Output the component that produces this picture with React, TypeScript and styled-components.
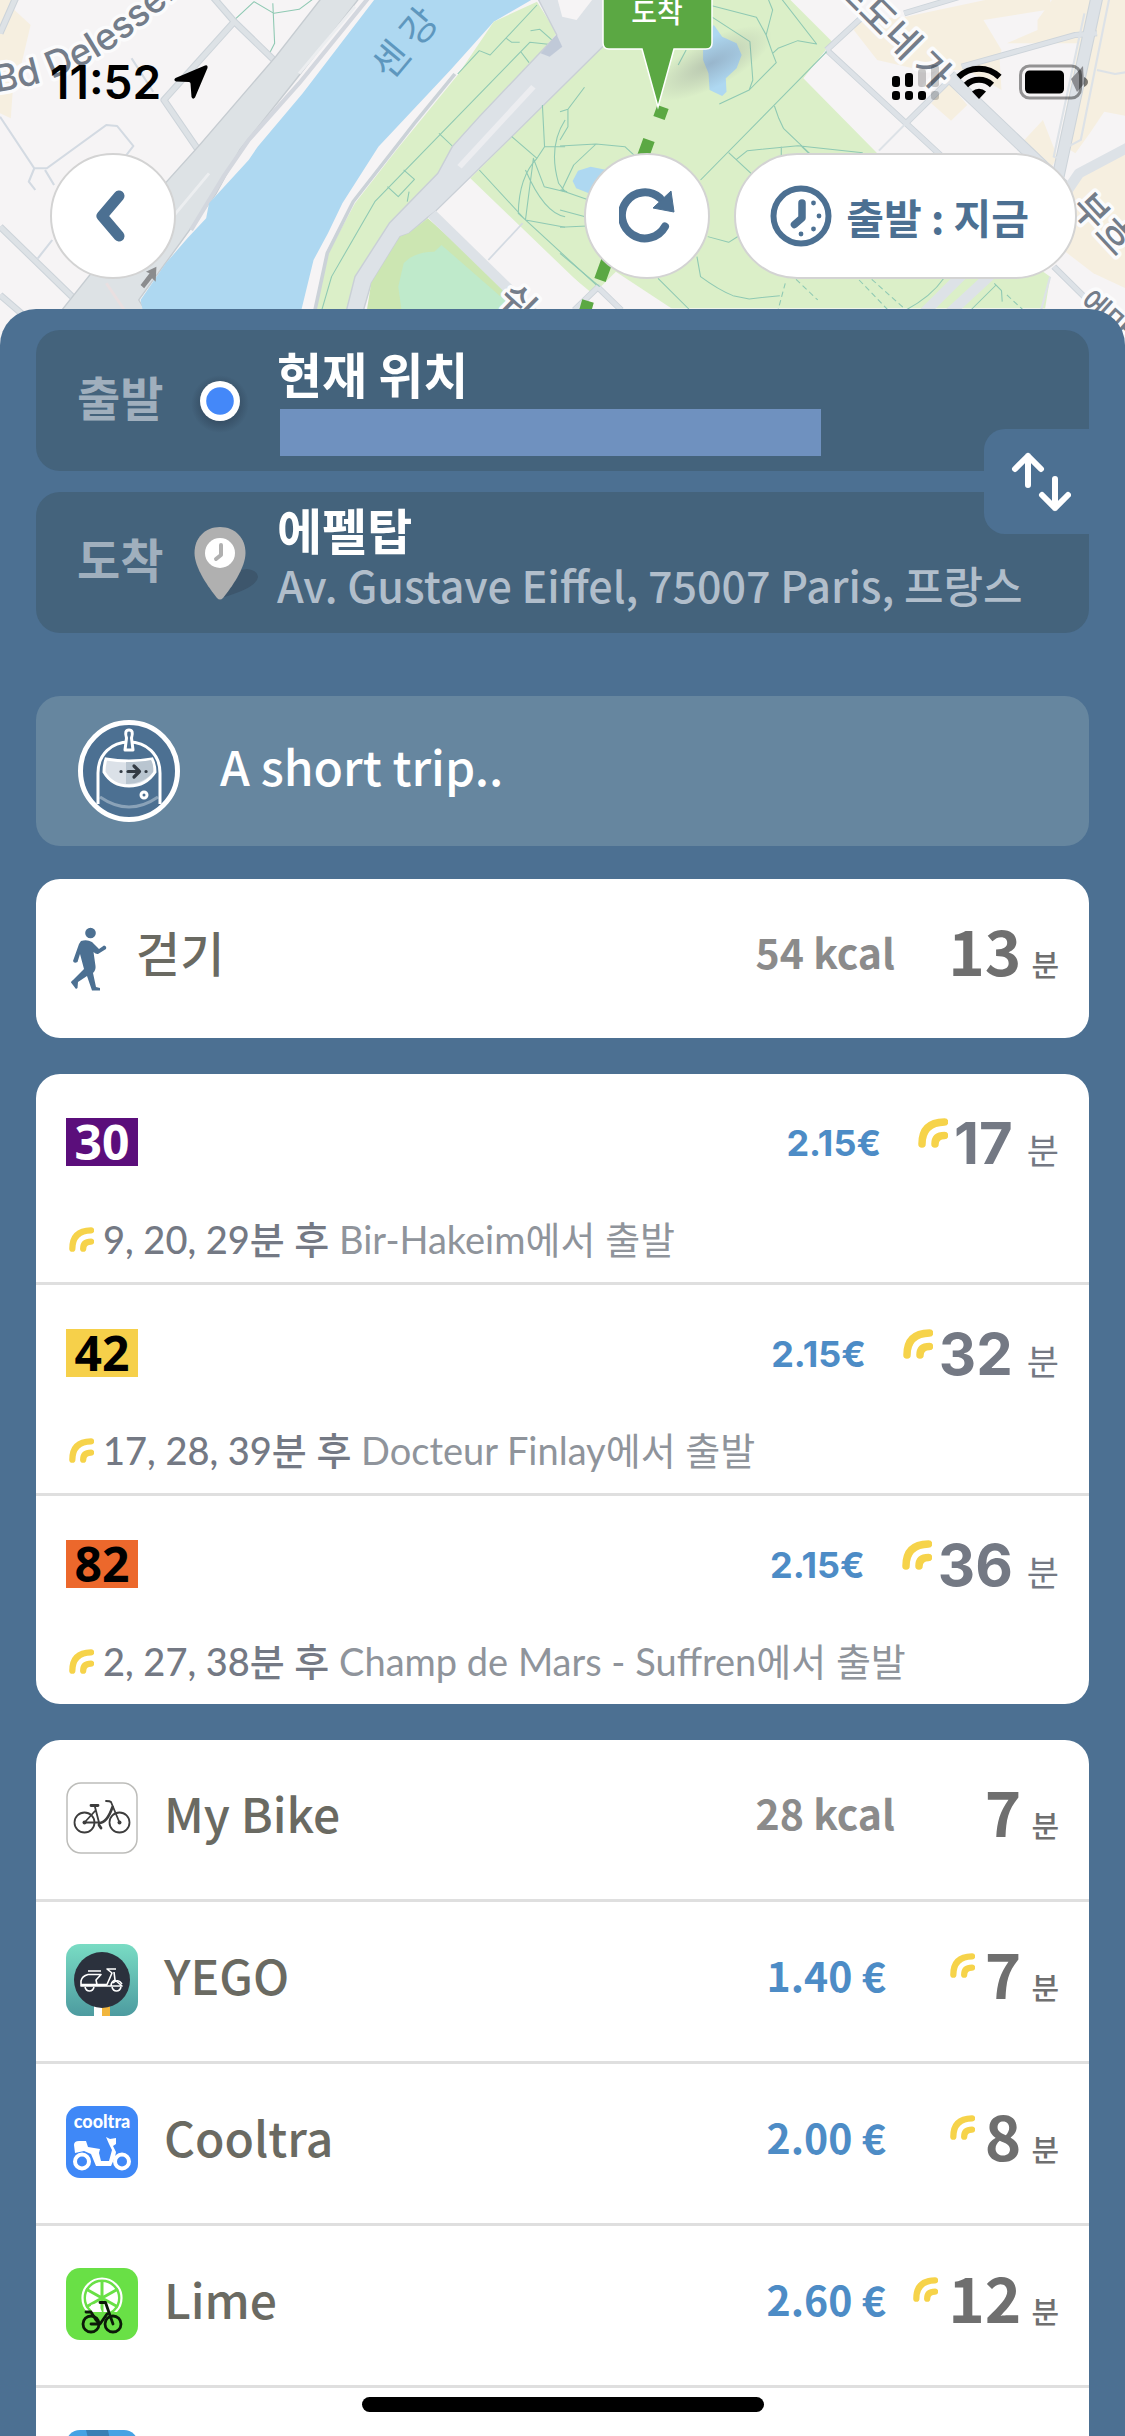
import React from "react";
import styled, { createGlobalStyle } from "styled-components";

const KR = `"Noto Sans CJK KR", "Noto Sans", sans-serif`;
const SOFT = `Lato, "Noto Sans CJK KR", sans-serif`;
const FIGURES = `Inter, "Noto Sans CJK KR", sans-serif`;

const color = {
  sheet: "#4c7092",
  field: "#44637c",
  notice: "#66869f",
  name: "#6a6a62",
  time: "#6f6f6f",
  muted: "#8b8b8b",
  slate: "#747984",
  slateLight: "#8f949b",
  price: "#4d8cc6",
  live: "#f6d34a",
  line: "#dfdfdf",
};

const GlobalStyle = createGlobalStyle`
  * { box-sizing: border-box; }
  body { margin: 0; font-family: ${KR}; background: ${color.sheet}; }
  button { font: inherit; border: 0; padding: 0; margin: 0; cursor: pointer; }
  ul { list-style: none; margin: 0; padding: 0; }
  svg { display: block; flex: none; }
`;

const Screen = styled.main`
  position: relative;
  display: flex;
  flex-direction: column;
  height: 100vh;
  overflow: hidden;
`;

/* ---------- map header ---------- */

const Header = styled.header`
  position: relative;
  flex: none;
  padding: 60px 48px 30px 50px;
`;

const MapCanvas = styled.svg`
  position: absolute;
  top: 0;
  left: 0;
  width: 100%;
  height: 350px;
`;

const StatusBar = styled.div`
  position: relative;
  display: flex;
  justify-content: space-between;
  align-items: center;
  height: 44px;
  margin-right: -12px;
`;

const StatusGroup = styled.div`
  display: flex;
  align-items: center;
  gap: ${(p: { $gap: number }) => p.$gap}px;
`;

const Clock = styled.time`
  font: 600 46px/44px Inter, sans-serif;
  color: #000;
`;

const Controls = styled.nav`
  position: relative;
  display: flex;
  gap: 24px;
  margin-top: 49px;
`;

const RoundButton = styled.button`
  display: flex;
  align-items: center;
  justify-content: center;
  width: 126px;
  height: 126px;
  border-radius: 63px;
  border: 2px solid #d3d3d3;
  background: #fff;
  &:first-child { margin-right: auto; }
`;

const PillButton = styled(RoundButton)`
  width: auto;
  gap: 14px;
  padding: 0 46px 0 34px;
  color: ${color.sheet};
  font: 700 41px/60px ${KR};
`;

/* ---------- sheet ---------- */

const Sheet = styled.section`
  position: relative;
  flex: 1;
  padding: 21px 36px 0;
  border-radius: 36px 36px 0 0;
  background: ${color.sheet};
`;

const Fields = styled.div`
  position: relative;
  display: flex;
  flex-direction: column;
  gap: 21px;
  margin-bottom: 63px;
`;

const Field = styled.button`
  display: grid;
  grid-template-columns: 86px 114px 1fr;
  align-items: center;
  height: 141px;
  padding-left: 41px;
  border-radius: 24px;
  background: ${color.field};
  text-align: left;
  white-space: nowrap;
`;

const FieldLabel = styled.span`
  padding-bottom: 10px;
  font-size: 47px;
  line-height: 56px;
  font-weight: 700;
  color: #a0afbd;
`;

const FieldIcon = styled.span`
  display: flex;
  justify-content: center;
`;

const FieldText = styled.span`
  display: flex;
  flex-direction: column;
`;

const FieldTitle = styled.span`
  font-size: 49px;
  line-height: 56px;
  font-weight: 700;
  color: #fff;
`;

const FieldAddress = styled.span`
  padding-bottom: 14px;
  font-size: 43px;
  line-height: 54px;
  font-weight: 500;
  color: #b1becb;
`;

const HiddenAddress = styled.span`
  height: 47px;
  margin: 8px 268px 0 3px;
  background: #6f91bf;
`;

const SwapButton = styled.button`
  position: absolute;
  right: 0;
  top: 99px;
  display: flex;
  align-items: center;
  justify-content: flex-end;
  width: 105px;
  height: 105px;
  padding-right: 18px;
  border-radius: 21px 0 0 21px;
  background: ${color.sheet};
`;

const Notice = styled.div`
  display: flex;
  align-items: center;
  gap: 40px;
  height: 150px;
  padding: 0 42px;
  margin-bottom: 33px;
  border-radius: 24px;
  background: ${color.notice};
`;

const NoticeText = styled.p`
  margin: 0;
  padding-bottom: 12px;
  font-size: 48px;
  line-height: 60px;
  font-weight: 500;
  color: #fff;
`;

const Card = styled.ul`
  margin-bottom: 36px;
  border-radius: 24px;
  background: #fff;
  overflow: hidden;
  > li + li { border-top: 3px solid ${color.line}; }
`;

const RideRow = styled.li`
  display: flex;
  align-items: flex-start;
  gap: 26px;
  padding: 42px 30px 45px;
  line-height: 60px;
`;

const RideIcon = styled.span`
  display: flex;
  align-items: center;
  width: ${(p: { $narrow?: boolean }) => (p.$narrow ? 44 : 72)}px;
  height: 72px;
`;

const RideName = styled.span`
  flex: 1;
  font-size: 48px;
  font-weight: 500;
  color: ${color.name};
`;

const Energy = styled.span`
  font-size: 41px;
  font-weight: 700;
  color: ${color.muted};
`;

const Price = styled.span`
  padding-right: 9px;
  font-size: 41px;
  font-weight: 700;
  color: ${color.price};
`;

const RideTime = styled.span`
  display: flex;
  justify-content: flex-end;
  align-items: baseline;
  gap: 10px;
  width: 138px;
  line-height: 56px;
  color: ${color.time};
  svg { align-self: flex-start; margin-top: 9px; }
  b { font-size: 62px; font-weight: 700; }
  small { font-size: 30px; font-weight: 500; }
`;

const LineRow = styled.li`
  padding: 44px 30px 19px;
  font-family: ${SOFT};
`;

const LineTop = styled.div`
  display: flex;
  align-items: flex-start;
  height: 48px;
  font-family: ${FIGURES};
  line-height: 50px;
`;

const LineBadge = styled.span`
  display: flex;
  align-items: center;
  justify-content: center;
  width: 72px;
  height: 48px;
  margin-right: auto;
  background: ${(p: { $bg: string; $fg: string }) => p.$bg};
  color: ${(p) => p.$fg};
  font: 700 48px/48px "Noto Sans", sans-serif;
`;

const Fare = styled.span`
  margin-right: 37px;
  font-size: 36px;
  font-weight: 700;
  color: ${color.price};
`;

const LineTime = styled.span`
  display: flex;
  align-items: baseline;
  color: ${color.slate};
  svg { align-self: flex-start; margin-right: 6px; }
  b { font-size: 58px; font-weight: 700; }
  small { margin-left: 14px; font-size: 35px; font-weight: 400; }
`;

const Departures = styled.div`
  display: flex;
  align-items: center;
  gap: 9px;
  margin-top: 49px;
  padding-left: 3px;
  font-size: 38px;
  line-height: 48px;
  color: ${color.slateLight};
  white-space: pre;
  strong { font-weight: 500; color: ${color.slate}; }
`;

const HomeIndicator = styled.div`
  position: absolute;
  left: 50%;
  bottom: 24px;
  width: 402px;
  height: 15px;
  margin-left: -201px;
  border-radius: 8px;
  background: #000;
`;

/* ---------- drawings ---------- */

const halo = {
  stroke: "#fbfbfc",
  strokeWidth: 7,
  strokeLinejoin: "round" as const,
  paintOrder: "stroke",
  fill: "#747d8a",
};

const ParisMap = () => (
  <MapCanvas viewBox="0 0 1125 350" preserveAspectRatio="xMidYMin slice" aria-hidden="true">
    <rect width="1125" height="350" fill="#f6f4f5" />
    <g transform="scale(.3604 .3333)" fill="none" strokeLinejoin="round">
      <path fill="#f6efe0" d="M0 0H30L40 30L85 75L60 190L40 200L30 355L0 340Z" />
      <g stroke="#cdd4da" strokeWidth="20">
        <path d="M590-10L650 65L760 180M650 65L455 300L550 450M0 100L45-10M0 680L200 890M0 885L70 950" />
      </g>
      <g stroke="#dde2e6" strokeWidth="14">
        <path d="M590-10L650 65L760 180M650 65L455 300L550 450M0 100L45-10M0 680L200 890M0 885L70 950" />
      </g>
      <path stroke="#d3dae2" strokeWidth="6" d="M0 350L95 505H130L295 375L325 378L370 438L340 480M365 175L425 275M95 505L80 545L98 570M125 510L150 555M105 775L145 720" />
      <path stroke="#8fc9b3" strokeWidth="3" d="M655 55L705 5L760 40L830 28L870-4M757 10L762 130L750 155" />
      <path fill="#dde2e5" stroke="#c6ccd1" strokeWidth="4" d="M895-10L765 170L550 440L400 620L150 960H420L385 900L600 580L665 450L820 240L1000-10Z" />
      <path stroke="#eceef0" strokeWidth="8" d="M985 20L830 220M580 520L480 650" />
      <path stroke="#d3d7de" strokeWidth="12" d="M1025-10L830 250L690 420L620 530L530 690" />
      <path fill="#aed8f1" d="M1045-10L840 280L715 440L690 480L580 610L572 655L520 715L460 790L390 900L420 1050H815L835 935L870 780L910 700L950 610L1050 440L1250 210L1370 65L1490-10Z" />
      <path fill="#dbefc8" d="M1270 225L1370 65L1490 5L1545 100L1450 220L1255 440L1215 520L1080 670L985 830L940 1050H850L910 760L985 610L1100 450Z" />
      <path stroke="#cbd2d8" strokeWidth="10" d="M1262 222L1150 370L980 605L908 760L860 1000" />
      <path stroke="#8fc9b3" strokeWidth="3" d="M1490 15L1360 165L1330 152L1270 222M1540 135L1470 127L1040 605L920 830L893 930M1405 115L1420 127H1442M1445 155L1468 188M1218 400L1255 438M1075 560L1105 590L1150 538L1120 510M1472 92L1498 88L1568 155M1130 605L1135 575" />
      <path fill="#dbefc8" d="M1568 250L1305 535L1680 925H2900L2914 830L2434 460L2229 235L2309 125L2184-10H1800Z" />
      <path fill="#dde2e7" stroke="#c9cfd6" strokeWidth="4" d="M1545 105L1330 350L1255 440L1215 520L1080 670L985 830L945 1000H990L1030 850L1110 710L1135 700L1187 652L1210 632L1420 410L1668 145L1820-20H1485Z" />
      <path fill="#f6f4f5" d="M1545-10H1650L1600 60L1560 50Z" />
      <path fill="#b9c3d4" d="M1500 160L1545 105L1560 140L1525 170Z" opacity=".8" />
      <path stroke="#ecedf0" strokeWidth="16" d="M1480 260L1275 500" />
      <path fill="#cce6b2" d="M1187 655L1440 900L1400 1050H1000L1030 850L1110 710L1135 700Z" />
      <path fill="#bfeacb" d="M1225 735L1400 900V1050H1130L1105 860L1120 790Q1150 755 1205 755Z" />
      <path stroke="#dde2e7" strokeWidth="30" d="M1198 642L1500 960" />
      <path stroke="#d3dae2" strokeWidth="5" d="M1355 780L1450 670" />
      <g stroke="#8fc9b3" strokeWidth="3">
        <path d="M1505 315L1511 440L1490 475L1420 410M1511 440H1568M1490 475Q1440 530 1438 640L1458 660L1480 475L1510 560L1568 575M1458 510Q1510 640 1568 650M1330 510L1458 660L1680 880M1458 660L1568 682M1568 360Q1520 440 1550 550L1568 575" />
      </g>
      <path fill="#8b8c8e" d="M390 855L415 820L405 815L434 800L432 845L422 835L400 865Z" />
      <path stroke="#e9dfe0" strokeWidth="8" d="M295 850L345 930" />
    </g>
    <g transform="translate(560 0) scale(.3604 .3333)" fill="none" strokeLinejoin="round">
      <g fill="#f6efe0">
        <path d="M830 60L960 50L1180 0H1360L1362 28L1175 60L1225 150L1220 180L1225 270L1130 210L1000 210L880 180L815 90Z" />
        <path d="M1365-10H1580V350L1510 335L1470 400L1430 460L1385 430L1440 130H1240L1325 90V60L1365 0Z" />
        <path d="M1340 360L1380 470L1360 510L1280 430ZM1030 310L1085 362L1130 315L1080 250Z" />
        <path d="M1430 520L1580 440V870L1480 820L1390 745Z" />
      </g>
      <path fill="#f6f4f5" d="M90 885L155 815L330 940H40Z" />
      <path fill="#f6f4f5" d="M0 800L95 885L40 940H0Z" />
      <g stroke="#cdd4da">
        <path strokeWidth="18" d="M740 150L1060 470M740 150L850 40M955 40L1110-10M1115 200L1430 105L1490 100M1100 220L960 370M40 930L105 862L170 930M1370 800L1520 960" />
        <path strokeWidth="36" d="M1080 230L1400 560M1490-10L1400 440L1380 540" />
      </g>
      <g stroke="#dde2e7">
        <path strokeWidth="13" d="M740 150L1060 470M740 150L850 40M955 40L1110-10M1115 200L1430 105L1490 100M1100 220L960 370M40 930L105 862L170 930M1370 800L1520 960" />
        <path strokeWidth="30" d="M1080 230L1400 560M1490-10L1400 440L1380 540M1580 440L1440 520L1390 600M1120 820L990 960M1200 820L1060 960" />
        <path strokeWidth="6" d="M960 370L885 452M1525-10L1445 420L1410 440M1455 40L1370 470L1400 480M1490 210L1540 222L1580 215M1360 830L1335 930" />
      </g>
      <g stroke="#8fc9b3" strokeWidth="3">
        <path d="M360 0L545 52L572 105L590 30L575-10M610-10L712 132L660 122L605 145L590 160L572 105M420 50L527 125L535 240L525 270L442 312M590 160L600 188L525 270M740 155L390 540M595 318L607 355L620 385L770 540M468 458L530 520M488 480L520 452L660 437L840 458M614 440V470M668 437L700 470M0 438L100 432L180 440L210 470M100 432L38 495L5 570L20 575M68 262L22 328L0 335M22 328V380L0 420M350 150L328 195M0 570L80 600M380 770L390 830Q440 870 480 887L525 897L610 887M0 630L70 650M0 682L75 678M410 710L468 727L500 705M0 760L110 860M272 835L360 930M1065 835Q1030 890 960 930M1205 850L1225 872L1227 905M1210 855L1140 930" />
        <path strokeDasharray="16 10" d="M625 850L605 930M655 838L715 900M830 840L910 930M865 838L960 930M1240 885L1285 930" />
      </g>
      <path fill="#aed8f1" d="M427 75L450 110L490 130L504 165L490 205L460 235L462 275L450 288L415 270L412 220L397 180V110Z" />
      <path fill="#aed8f1" d="M35 543L50 512L85 500L130 510V580H80L45 565Z" />
      <ellipse cx="420" cy="190" rx="190" ry="70" transform="rotate(-30 420 190)" fill="url(#pinShade)" />
    </g>
    <defs>
      <radialGradient id="pinShade">
        <stop offset="0" stopColor="#667" stopOpacity=".3" />
        <stop offset="1" stopColor="#667" stopOpacity="0" />
      </radialGradient>
      <path id="boulevard" d="M-4 92Q60 84 112 48Q150 22 190-16" />
    </defs>
    <path d="M663 107L659 118M649 140L641 162M608 258L600 280M588 301L582 322" fill="none" stroke="#5ba843" strokeWidth="12" />
    <path d="M603-10V43Q603 49 609 49H642L658 107L674 49H706Q712 49 712 43V-10Z" fill="#5ba843" stroke="#fff" strokeWidth="1.5" />
    <text x="657" y="23" textAnchor="middle" fontFamily="Noto Sans CJK KR" fontSize="28" fontWeight="500" fill="#fff">도착</text>
    <g fontFamily="Noto Sans CJK KR" fontSize="37" fontWeight="500">
      <text fontFamily="Inter" fontSize="37" {...halo}><textPath href="#boulevard">Bd Delesser</textPath></text>
      <text transform="translate(390 82) rotate(-50)" fontSize="38" fontWeight="400" fill="#5e97be">센 강</text>
      <text transform="translate(496 300) rotate(45)" {...halo}>쉬</text>
      <text transform="translate(833-11) rotate(45)" {...halo}>르도네 가</text>
      <text transform="translate(1070 208) rotate(47)" {...halo}>부흐</text>
      <text transform="translate(1078 304) rotate(42)" fontSize="30" {...halo}>에마</text>
    </g>
    <path d="M1071 79L1083 66L1084 84L1077 92Z" fill="#8b8c90" />
  </MapCanvas>
);

const LocationArrow = () => (
  <svg width="36" height="36" viewBox="0 0 36 36">
    <path d="M32 1.500Q35 .5 34.500 4L22 33.500Q20 36 18.500 33L17.500 19.500Q17.400 18.200 16 18L3 17.500Q0 16 2.500 14Z" fill="#000" />
  </svg>
);

const CellularIcon = () => (
  <svg width="48" height="36" viewBox="0 0 48 36">
    <g fill="#000">
      <rect x="1" y="12" width="8" height="11" rx="3" />
      <rect x="14" y="9" width="8" height="14" rx="3" />
      <rect x="1" y="27" width="8" height="9" rx="3" />
      <rect x="14" y="27" width="8" height="9" rx="3" />
      <rect x="27" y="27" width="8" height="9" rx="3" />
    </g>
    <g fill="#000" opacity=".2">
      <rect x="27" y="5" width="8" height="18" rx="3" />
      <rect x="40" y="1" width="8" height="22" rx="3" />
      <rect x="40" y="27" width="8" height="9" rx="3" />
    </g>
  </svg>
);

const WifiIcon = () => (
  <svg width="46" height="34" viewBox="0 0 46 34">
    <g fill="none" stroke="#000" strokeWidth="6">
      <path d="M2.500 12A29.500 29.500 0 0 1 43.500 12" />
      <path d="M10 20A19 19 0 0 1 36 20" />
    </g>
    <path d="M16 26.500A10.500 10.500 0 0 1 30 26.500L23 34Z" fill="#000" />
  </svg>
);

const BatteryIcon = () => (
  <svg width="70" height="36" viewBox="0 0 70 36">
    <rect x="1.500" y="2" width="60" height="32" rx="9" fill="none" stroke="#000" strokeOpacity=".4" strokeWidth="3" />
    <rect x="6" y="6.500" width="39" height="23" rx="4.500" fill="#000" />
    <path d="M65 13Q69 15 69 18T65 23Z" fill="#000" opacity=".5" />
  </svg>
);

const BackIcon = () => (
  <svg width="34" height="54" viewBox="4 0 34 54">
    <path d="M27 7L10 27L27 47" fill="none" stroke={color.sheet} strokeWidth="11" strokeLinecap="round" strokeLinejoin="round" />
  </svg>
);

const RefreshIcon = () => (
  <svg width="56" height="56" viewBox="0 0 56 56">
    <path d="M46 38.500A23 23 0 1 1 41 10" fill="none" stroke={color.sheet} strokeWidth="8" strokeLinecap="round" />
    <path d="M52 3L55 24L34 20Z" fill={color.sheet} stroke={color.sheet} strokeWidth="1" strokeLinejoin="round" />
  </svg>
);

const ClockIcon = () => (
  <svg width="62" height="62" viewBox="0 0 62 62">
    <circle cx="31" cy="31" r="27.500" fill="none" stroke={color.sheet} strokeWidth="6" />
    <path d="M32 18V33L24.500 39.500" fill="none" stroke={color.sheet} strokeWidth="7.500" strokeLinecap="round" strokeLinejoin="round" />
    <g fill={color.sheet}>
      <circle cx="43.500" cy="18" r="2.400" />
      <circle cx="49" cy="31" r="2.400" />
      <circle cx="43.500" cy="44" r="2.400" />
      <circle cx="31" cy="49" r="2.400" />
    </g>
  </svg>
);

const CurrentDot = () => (
  <svg width="64" height="64" viewBox="0 0 64 64">
    <defs>
      <radialGradient id="dotShade">
        <stop offset=".55" stopColor="#2f4459" stopOpacity=".7" />
        <stop offset="1" stopColor="#2f4459" stopOpacity="0" />
      </radialGradient>
    </defs>
    <circle cx="32" cy="35" r="29" fill="url(#dotShade)" />
    <circle cx="32" cy="32" r="20" fill="#fff" />
    <circle cx="32" cy="32" r="13.800" fill="#4488f9" />
  </svg>
);

const PinIcon = () => (
  <svg width="78" height="74" viewBox="0 0 78 74">
    <path d="M40 72Q44 44 66 43Q76 44 77 51Q76 62 40 72Z" fill="#3d566c" />
    <path d="M39 1C24 1 13.500 12 13.500 27C13.500 42 28 62 36 72Q39 75 42 72C50 62 64.500 42 64.500 27C64.500 12 54 1 39 1Z" fill="#b0b0b0" />
    <circle cx="39" cy="27" r="15" fill="#fff" />
    <path d="M40 19V29L35 33" fill="none" stroke="#b0b0b0" strokeWidth="4" strokeLinecap="round" strokeLinejoin="round" />
  </svg>
);

const SwapIcon = () => (
  <svg width="60" height="60" viewBox="0 0 60 60">
    <g fill="none" stroke="#fff" strokeWidth="6" strokeLinecap="round" strokeLinejoin="round">
      <path d="M17 33V4M4 17L17 4L30 17" />
      <path d="M44 27V56M31 43L44 56L57 43" />
    </g>
  </svg>
);

const RobotIcon = () => (
  <svg width="102" height="102" viewBox="0 0 102 102">
    <circle cx="51" cy="51" r="48.500" fill={color.sheet} />
    <g fill="none" stroke="#fff" strokeWidth="3">
      <path d="M20 84V53C20 34 34 22 51 22S82 34 82 53V84" />
      <path d="M22 77Q51 97 80 77" strokeOpacity=".35" />
      <path d="M28 39Q51 43 74 39Q77 45 77 52Q68 66 51 66T26 52Q26 45 28 39Z" fill="#dbe1e8" />
      <path d="M47 30L48.500 18Q46 10 51 10T53.500 18L55 30Z" fill={color.sheet} strokeLinejoin="round" />
      <circle cx="66" cy="75" r="3" />
      <circle cx="51" cy="51" r="48.500" strokeWidth="5" />
    </g>
    <path d="M48 42Q62 42 73 40Q76 45 75 52Q66 64 48 64Z" fill="#b9c5d0" />
    <g stroke="#333b44" strokeWidth="3.200" fill="none" strokeLinecap="round" strokeLinejoin="round">
      <path d="M50 51.500H61M56 46L61.500 51.500L56 57M43 51.500H43.100M68 51.500H68.100" />
    </g>
  </svg>
);

const WalkIcon = () => (
  <svg width="44" height="68" viewBox="-2 -4 44 68">
    <g fill={color.sheet}>
      <circle cx="22.500" cy="6" r="5.300" />
      <path d="M13 14Q19 12 24 15L31 22L36 18.500Q39 19 38 22L30 27Q28 27.500 25.500 25L27.500 39Q28 43 25 46L28 60L32 61V63.500H24L19 49L10 55L9.500 61L8 62L3 55.500Q3 54 5 53L16 42L12 27L9.500 35Q6 37 5 34L11 17Z" />
    </g>
  </svg>
);

const LiveIcon = ({ size }: { size: number }) => (
  <svg width={size} height={size} viewBox="0 0 30 30" aria-label="실시간" role="img">
    <g fill="none" stroke={color.live} strokeWidth="7.500" strokeLinecap="round">
      <path d="M4 26Q4 4.500 26.500 4" />
      <path d="M17 26Q17 17.500 26.500 17.500" />
    </g>
  </svg>
);

const BikeLogo = () => (
  <svg width="72" height="72" viewBox="0 0 72 72">
    <rect x="1" y="1" width="70" height="70" rx="14" fill="#fff" stroke="#bdbdba" strokeWidth="1.500" />
    <g fill="none" stroke="#3d3d3d" strokeWidth="1.800" strokeLinecap="round" strokeLinejoin="round">
      <circle cx="18.500" cy="40.500" r="10" />
      <circle cx="53.500" cy="40.500" r="10" />
      <path d="M18.500 40.500H33L29 25M18.500 40.500L29 29M53.500 40.500L45 20Q44 19 40 19" />
      <path d="M33 41Q41 41 46.500 25" strokeWidth="2.600" />
      <path d="M25 23.500H32M33 43L35 46" strokeWidth="2.800" />
    </g>
    <circle cx="18.500" cy="40.500" r="2" fill="#3d3d3d" />
    <circle cx="53.500" cy="40.500" r="2" fill="#3d3d3d" />
  </svg>
);

const YegoLogo = () => (
  <svg width="72" height="72" viewBox="0 0 72 72">
    <defs>
      <linearGradient id="yego" x1="0" y1="0" x2="0" y2="1">
        <stop offset="0" stopColor="#79dcc4" />
        <stop offset="1" stopColor="#4d9ba0" />
      </linearGradient>
    </defs>
    <rect width="72" height="72" rx="14" fill="url(#yego)" />
    <path d="M28 60H36V72H28Z" fill="#fff" />
    <path d="M36 60H44V72H36Z" fill="#f1b63e" />
    <circle cx="36" cy="36" r="28" fill="#2b313d" />
    <g fill="none" stroke="#fff" strokeWidth="1.600" strokeLinejoin="round">
      <path d="M15 42V37Q16 32 22 30.500H35L30 36L31 40.500H41L46 29L41 25H50M48 28L49 36L56 42H15V40.500H31M22 27H35M49 36Q45 38 45 42" />
      <path d="M19 43Q20 47 23.500 47T28 43M46 43Q47 47 50.500 47T55 43M47 39Q52 34 56 40" />
    </g>
  </svg>
);

const CooltraLogo = () => (
  <svg width="72" height="72" viewBox="0 0 72 72">
    <rect width="72" height="72" rx="14" fill="#3f88f7" />
    <text x="36" y="22" textAnchor="middle" fontFamily="Lato" fontWeight="900" fontSize="18" fill="#fff">cooltra</text>
    <g fill="none" stroke="#fff" strokeWidth="4">
      <circle cx="16" cy="55.500" r="7" />
      <circle cx="56" cy="55.500" r="7" />
    </g>
    <path d="M8 39Q8 35 13 35H20L22 41L34 43L33 47L35 55H43L46 44L43 38L40 31L44 33L50 32V38L47 40L50 46L49 51L45 60H30L25 48L18 45L9 47Z" fill="#fff" />
  </svg>
);

const LimeLogo = () => (
  <svg width="72" height="72" viewBox="0 0 72 72">
    <rect width="72" height="72" rx="14" fill="#69e046" />
    <circle cx="36" cy="30" r="19.500" fill="none" stroke="#fff" strokeWidth="2.200" />
    <circle cx="36" cy="30" r="16" fill="#fff" />
    <path d="M36 13V47M20 21L52 39M20 39L52 21" stroke="#69e046" strokeWidth="3" />
    <path d="M17 44H55V54H17Z" fill="#69e046" />
    <path d="M25 37Q32 34 36 44H26Z" fill="#fff" />
    <g fill="none" stroke="#0b1a08" strokeWidth="2.800" strokeLinecap="round" strokeLinejoin="round">
      <circle cx="25" cy="56" r="8" />
      <circle cx="47" cy="56" r="8" />
      <path d="M34 34.500H39.500L47 56M25 56H34L41 46M20 44H25L30 52L34 56" />
    </g>
  </svg>
);

const BlueLogo = () => (
  <svg width="72" height="72" viewBox="0 0 72 72">
    <rect width="72" height="72" rx="14" fill="#46a2e3" />
    <path d="M20 0H42L50 40H30Z" fill="#3a7fb4" />
  </svg>
);

/* ---------- data ---------- */

const lines = [
  { no: "30", bg: "#5b0e7b", fg: "#fff", time: "17", next: "9, 20, 29분 후", stop: "Bir-Hakeim에서 출발" },
  { no: "42", bg: "#f6d04a", fg: "#000", time: "32", next: "17, 28, 39분 후", stop: "Docteur Finlay에서 출발" },
  { no: "82", bg: "#ec682c", fg: "#000", time: "36", next: "2, 27, 38분 후", stop: "Champ de Mars - Suffren에서 출발" },
];

const rides = [
  { name: "My Bike", logo: <BikeLogo />, energy: "28 kcal", time: "7" },
  { name: "YEGO", logo: <YegoLogo />, price: "1.40 €", time: "7" },
  { name: "Cooltra", logo: <CooltraLogo />, price: "2.00 €", time: "8" },
  { name: "Lime", logo: <LimeLogo />, price: "2.60 €", time: "12" },
];

export default function App() {
  return (
    <Screen>
      <GlobalStyle />
      <Header>
        <ParisMap />
        <StatusBar>
          <StatusGroup $gap={12}>
            <Clock>11:52</Clock>
            <LocationArrow />
          </StatusGroup>
          <StatusGroup $gap={17}>
            <CellularIcon />
            <WifiIcon />
            <BatteryIcon />
          </StatusGroup>
        </StatusBar>
        <Controls>
          <RoundButton aria-label="뒤로"><BackIcon /></RoundButton>
          <RoundButton aria-label="새로고침"><RefreshIcon /></RoundButton>
          <PillButton><ClockIcon />출발 : 지금</PillButton>
        </Controls>
      </Header>

      <Sheet>
        <Fields>
          <Field>
            <FieldLabel>출발</FieldLabel>
            <FieldIcon><CurrentDot /></FieldIcon>
            <FieldText>
              <FieldTitle>현재 위치</FieldTitle>
              <HiddenAddress />
            </FieldText>
          </Field>
          <Field>
            <FieldLabel>도착</FieldLabel>
            <FieldIcon><PinIcon /></FieldIcon>
            <FieldText>
              <FieldTitle>에펠탑</FieldTitle>
              <FieldAddress>Av. Gustave Eiffel, 75007 Paris, 프랑스</FieldAddress>
            </FieldText>
          </Field>
          <SwapButton aria-label="출발지와 도착지 바꾸기"><SwapIcon /></SwapButton>
        </Fields>

        <Notice>
          <RobotIcon />
          <NoticeText>A short trip..</NoticeText>
        </Notice>

        <Card>
          <RideRow>
            <RideIcon $narrow><WalkIcon /></RideIcon>
            <RideName>걷기</RideName>
            <Energy>54 kcal</Energy>
            <RideTime><b>13</b><small>분</small></RideTime>
          </RideRow>
        </Card>

        <Card>
          {lines.map((l) => (
            <LineRow key={l.no}>
              <LineTop>
                <LineBadge $bg={l.bg} $fg={l.fg}>{l.no}</LineBadge>
                <Fare>2.15€</Fare>
                <LineTime>
                  <LiveIcon size={30} />
                  <b>{l.time}</b>
                  <small>분</small>
                </LineTime>
              </LineTop>
              <Departures>
                <LiveIcon size={25} />
                <span><strong>{l.next}</strong> {l.stop}</span>
              </Departures>
            </LineRow>
          ))}
        </Card>

        <Card>
          {rides.map((r) => (
            <RideRow key={r.name}>
              <RideIcon>{r.logo}</RideIcon>
              <RideName>{r.name}</RideName>
              {r.energy && <Energy>{r.energy}</Energy>}
              {r.price && <Price>{r.price}</Price>}
              <RideTime>
                {r.price && <LiveIcon size={25} />}
                <b>{r.time}</b>
                <small>분</small>
              </RideTime>
            </RideRow>
          ))}
          <RideRow>
            <RideIcon><BlueLogo /></RideIcon>
          </RideRow>
        </Card>
      </Sheet>
      <HomeIndicator />
    </Screen>
  );
}
